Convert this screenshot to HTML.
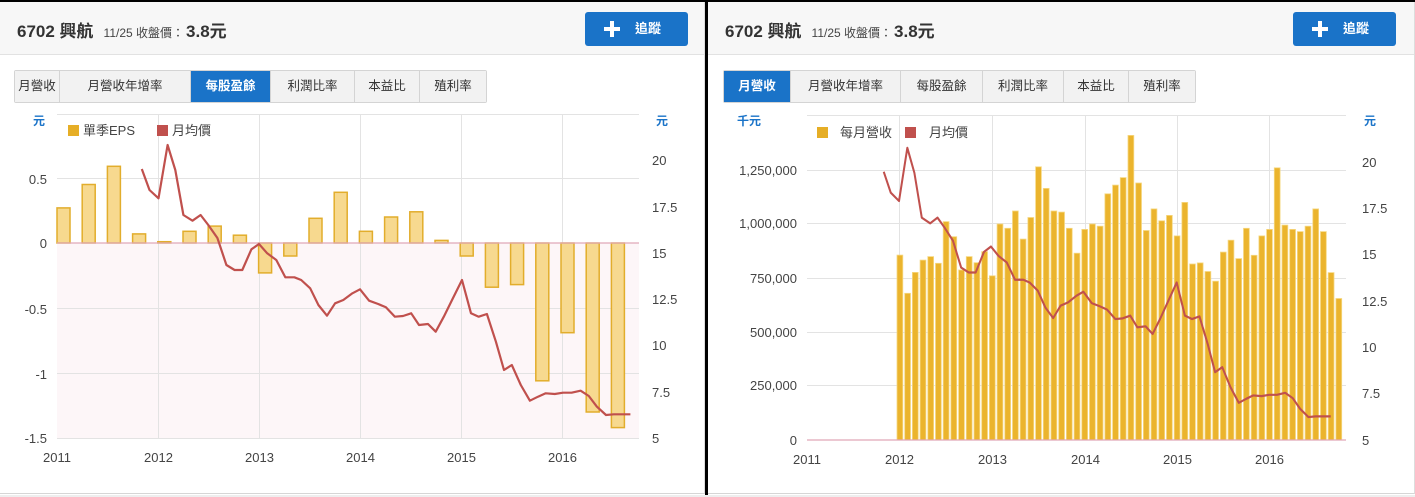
<!DOCTYPE html>
<html><head><meta charset="utf-8"><style>
*{margin:0;padding:0;box-sizing:border-box}
body{width:1415px;height:497px;position:relative;overflow:hidden;background:#fff;font-family:"Liberation Sans","Noto Sans CJK TC",sans-serif}
.panel{position:absolute;top:2px;height:492px;background:#fff;border-right:1px solid #ddd;border-bottom:1px solid #d6d6d6}
.hdr{position:absolute;left:0;top:0;right:0;height:53px;background:#f7f7f7;border-bottom:1px solid #e2e2e2}
.ttl{position:absolute;left:17px;top:15px;font-size:17px;font-weight:bold;color:#333;white-space:nowrap}
.ttl small{font-size:12px;font-weight:normal;color:#444;margin:0 2px 0 10px}
.btn{position:absolute;top:10px;width:103px;height:34px;background:#1a73c8;border-radius:3px;color:#fff;font-size:13px;font-weight:bold;line-height:34px}
.btn svg{position:absolute;left:19px;top:9px}
.btn span{position:absolute;left:50px}
.tabs{position:absolute;top:68px;height:33px;display:flex;border:1px solid #d4d4d4;border-radius:2px}
.tabs div{height:31px;line-height:31px;font-size:12.5px;color:#333;background:#f2f2f2;border-right:1px solid #d4d4d4;text-align:center;white-space:nowrap}
.tabs div:last-child{border-right:0}
.tabs .on{background:#1a73c8;color:#fff;font-weight:bold}
svg.c{position:absolute;left:0;top:0}
svg text{font-family:"Liberation Sans","Noto Sans CJK TC",sans-serif;font-size:13px;fill:#444}
</style></head><body>
<div style="position:absolute;left:0;top:0;width:1415px;height:2px;background:#000"></div>
<div style="position:absolute;left:705px;top:0;width:3px;height:497px;background:#000"></div>
<div style="position:absolute;left:0;top:495px;width:1415px;height:2px;background:#eee"></div>

<div class="panel" style="left:0;width:705px">
 <div class="hdr"></div>
 <div class="ttl">6702 興航<small>11/25 收盤價：</small>3.8元</div>
 <div class="btn" style="left:585px"><svg width="16" height="16"><rect x="6" y="0" width="4" height="16" fill="#fff"/><rect x="0" y="6" width="16" height="4" fill="#fff"/></svg><span>追蹤</span></div>
 <div class="tabs" style="left:14px">
  <div style="width:45px">月營收</div><div style="width:131px">月營收年增率</div><div class="on" style="width:80px">每股盈餘</div><div style="width:84px">利潤比率</div><div style="width:65px">本益比</div><div style="width:66px">殖利率</div>
 </div>
</div>
<div class="panel" style="left:708px;width:707px">
 <div class="hdr"></div>
 <div class="ttl">6702 興航<small>11/25 收盤價：</small>3.8元</div>
 <div class="btn" style="left:585px"><svg width="16" height="16"><rect x="6" y="0" width="4" height="16" fill="#fff"/><rect x="0" y="6" width="16" height="4" fill="#fff"/></svg><span>追蹤</span></div>
 <div class="tabs" style="left:15px">
  <div class="on" style="width:67px">月營收</div><div style="width:110px">月營收年增率</div><div style="width:82px">每股盈餘</div><div style="width:81px">利潤比率</div><div style="width:65px">本益比</div><div style="width:66px">殖利率</div>
 </div>
</div>

<svg class="c" width="1415" height="497" viewBox="0 0 1415 497">
<rect x="57" y="243" width="582" height="195" fill="#fdf6f8"/>
<g stroke="#e3e3e3" stroke-width="1">
<line x1="57" y1="114.5" x2="639" y2="114.5"/><line x1="57" y1="178.5" x2="639" y2="178.5"/>
<line x1="57" y1="308.5" x2="639" y2="308.5"/><line x1="57" y1="373.5" x2="639" y2="373.5"/><line x1="57" y1="438.5" x2="639" y2="438.5"/>
<line x1="158.5" y1="114" x2="158.5" y2="438"/><line x1="259.5" y1="114" x2="259.5" y2="438"/><line x1="360.5" y1="114" x2="360.5" y2="438"/><line x1="461.5" y1="114" x2="461.5" y2="438"/><line x1="562.5" y1="114" x2="562.5" y2="438"/>
</g>
<g fill="#f7d98f" stroke="#e2ad2c" stroke-width="1.5">
<rect x="57" y="207.9" width="13" height="35.1"/><rect x="82.2" y="184.5" width="13" height="58.5"/><rect x="107.4" y="166.3" width="13" height="76.7"/><rect x="132.6" y="233.9" width="13" height="9.1"/><rect x="157.8" y="241.7" width="13" height="1.3"/><rect x="183" y="231.3" width="13" height="11.7"/><rect x="208.2" y="226.1" width="13" height="16.9"/><rect x="233.4" y="235.2" width="13" height="7.8"/><rect x="258.6" y="243" width="13" height="29.9"/><rect x="283.8" y="243" width="13" height="13"/><rect x="309" y="218.3" width="13" height="24.7"/><rect x="334.2" y="192.3" width="13" height="50.7"/><rect x="359.4" y="231.3" width="13" height="11.7"/><rect x="384.6" y="217" width="13" height="26"/><rect x="409.8" y="211.8" width="13" height="31.2"/><rect x="435" y="240.4" width="13" height="2.6"/><rect x="460.2" y="243" width="13" height="13"/><rect x="485.4" y="243" width="13" height="44.2"/><rect x="510.6" y="243" width="13" height="41.6"/><rect x="535.8" y="243" width="13" height="137.8"/><rect x="561" y="243" width="13" height="89.7"/><rect x="586.2" y="243" width="13" height="169"/><rect x="611.4" y="243" width="13" height="184.6"/>
</g>
<line x1="57" y1="243" x2="639" y2="243" stroke="#e0a8b8" stroke-width="1.2"/>
<polyline id="pl" fill="none" stroke="#c0504d" stroke-width="2.2" stroke-linejoin="round" points="141.8,169 149.5,190 158.5,198.3 167.6,145 175.3,170 183.4,215 192.5,220.7 200.6,215 208.3,225 217.4,238 226.4,265 234.6,270 242.3,270 251.4,249.3 259,244 267.2,253.3 276.3,260 285.3,277.3 294.4,277.3 301.2,280 310.2,288.3 318.4,305 327,315.7 335.1,303.3 343.3,300 352.4,293.3 360,289.3 369.1,300.7 378.2,304 385.9,307.3 394.9,316.7 403,316 411.2,313.3 419,325 428,324 435.7,331.7 443.8,316.7 452.9,298.3 462,280 471,313.3 478.7,316.7 486.9,314 495.9,341.7 504,370 511.8,365 520.8,385 529.9,400.7 538,396.7 545.7,393.3 554.8,394 563,392.7 571.6,392.7 580.6,390.7 588.8,396 596.9,406.7 606,415 613.7,414.3 622.7,414.3 630.4,414.3"/>
<g text-anchor="end"><text x="47" y="184">0.5</text><text x="47" y="248">0</text><text x="47" y="314">-0.5</text><text x="47" y="379">-1</text><text x="47" y="443">-1.5</text></g>
<g><text x="652" y="165">20</text><text x="652" y="212">17.5</text><text x="652" y="258">15</text><text x="652" y="304">12.5</text><text x="652" y="350">10</text><text x="652" y="397">7.5</text><text x="652" y="443">5</text></g>
<g text-anchor="middle"><text x="57" y="462">2011</text><text x="158.5" y="462">2012</text><text x="259.5" y="462">2013</text><text x="360.5" y="462">2014</text><text x="461.5" y="462">2015</text><text x="562.5" y="462">2016</text></g>
<text x="33" y="125" style="fill:#1a73c8;font-weight:bold;font-size:12px">元</text>
<text x="656" y="125" style="fill:#1a73c8;font-weight:bold;font-size:12px">元</text>
<rect x="68" y="125" width="11" height="11" fill="#e6ae26"/><text x="83" y="135">單季EPS</text>
<rect x="157" y="125" width="11" height="11" fill="#c0504d"/><text x="172" y="135">月均價</text>

<g stroke="#e3e3e3" stroke-width="1">
<line x1="807" y1="115.5" x2="1346" y2="115.5"/><line x1="807" y1="170.5" x2="1346" y2="170.5"/><line x1="807" y1="223.5" x2="1346" y2="223.5"/><line x1="807" y1="278.5" x2="1346" y2="278.5"/><line x1="807" y1="332.5" x2="1346" y2="332.5"/><line x1="807" y1="385.5" x2="1346" y2="385.5"/>
<line x1="899.5" y1="115" x2="899.5" y2="440"/><line x1="992.5" y1="115" x2="992.5" y2="440"/><line x1="1085.5" y1="115" x2="1085.5" y2="440"/><line x1="1177.5" y1="115" x2="1177.5" y2="440"/><line x1="1269.5" y1="115" x2="1269.5" y2="440"/>
</g>
<g fill="#ebb42d" stroke="#f6d882" stroke-width="0.8">
<rect x="897" y="255.1" width="5.8" height="184.9"/><rect x="904.7" y="293.3" width="5.8" height="146.7"/><rect x="912.4" y="272.4" width="5.8" height="167.6"/><rect x="920.1" y="260.1" width="5.8" height="179.9"/><rect x="927.8" y="256.6" width="5.8" height="183.4"/><rect x="935.5" y="263.3" width="5.8" height="176.7"/><rect x="943.2" y="221.6" width="5.8" height="218.4"/><rect x="950.9" y="236.7" width="5.8" height="203.3"/><rect x="958.6" y="270" width="5.8" height="170"/><rect x="966.3" y="256.6" width="5.8" height="183.4"/><rect x="974" y="262.7" width="5.8" height="177.3"/><rect x="981.7" y="251.6" width="5.8" height="188.4"/>
<rect x="989.4" y="275.8" width="5.8" height="164.2"/><rect x="997.1" y="224" width="5.8" height="216"/><rect x="1004.8" y="228.3" width="5.8" height="211.7"/><rect x="1012.5" y="211" width="5.8" height="229"/><rect x="1020.2" y="239.1" width="5.8" height="200.9"/><rect x="1027.9" y="217.5" width="5.8" height="222.5"/><rect x="1035.6" y="166.8" width="5.8" height="273.2"/><rect x="1043.3" y="188.4" width="5.8" height="251.6"/><rect x="1051" y="211" width="5.8" height="229"/><rect x="1058.7" y="212.1" width="5.8" height="227.9"/><rect x="1066.4" y="228.3" width="5.8" height="211.7"/><rect x="1074.1" y="253.2" width="5.8" height="186.8"/>
<rect x="1081.8" y="229.4" width="5.8" height="210.6"/><rect x="1089.5" y="224" width="5.8" height="216"/><rect x="1097.2" y="226.2" width="5.8" height="213.8"/><rect x="1104.9" y="193.8" width="5.8" height="246.2"/><rect x="1112.6" y="185.1" width="5.8" height="254.9"/><rect x="1120.3" y="177.6" width="5.8" height="262.4"/><rect x="1128" y="135.4" width="5.8" height="304.6"/><rect x="1135.7" y="183" width="5.8" height="257"/><rect x="1143.4" y="230.5" width="5.8" height="209.5"/><rect x="1151.1" y="208.9" width="5.8" height="231.1"/><rect x="1158.8" y="220.8" width="5.8" height="219.2"/><rect x="1166.5" y="215.4" width="5.8" height="224.6"/>
<rect x="1174.2" y="235.9" width="5.8" height="204.1"/><rect x="1181.9" y="202.4" width="5.8" height="237.6"/><rect x="1189.6" y="264" width="5.8" height="176"/><rect x="1197.3" y="262.9" width="5.8" height="177.1"/><rect x="1205" y="271.5" width="5.8" height="168.5"/><rect x="1212.7" y="281.2" width="5.8" height="158.8"/><rect x="1220.4" y="252.1" width="5.8" height="187.9"/><rect x="1228.1" y="240.2" width="5.8" height="199.8"/><rect x="1235.8" y="258.6" width="5.8" height="181.4"/><rect x="1243.5" y="228.3" width="5.8" height="211.7"/><rect x="1251.2" y="255.3" width="5.8" height="184.7"/><rect x="1258.9" y="235.9" width="5.8" height="204.1"/>
<rect x="1266.6" y="229.4" width="5.8" height="210.6"/><rect x="1274.3" y="167.8" width="5.8" height="272.2"/><rect x="1282" y="225.1" width="5.8" height="214.9"/><rect x="1289.7" y="229.4" width="5.8" height="210.6"/><rect x="1297.4" y="231.6" width="5.8" height="208.4"/><rect x="1305.1" y="226.2" width="5.8" height="213.8"/><rect x="1312.8" y="208.9" width="5.8" height="231.1"/><rect x="1320.5" y="231.6" width="5.8" height="208.4"/><rect x="1328.2" y="272.6" width="5.8" height="167.4"/><rect x="1335.9" y="298.5" width="5.8" height="141.5"/>
</g>
<line x1="807" y1="440" x2="1346" y2="440" stroke="#e0a8b8" stroke-width="1.2"/>
<use href="#pl" transform="matrix(0.9149 0 0 0.997 754 3.3)"/>
<g text-anchor="end"><text x="797" y="175">1,250,000</text><text x="797" y="228">1,000,000</text><text x="797" y="283">750,000</text><text x="797" y="337">500,000</text><text x="797" y="390">250,000</text><text x="797" y="445">0</text></g>
<g><text x="1362" y="167">20</text><text x="1362" y="213">17.5</text><text x="1362" y="259">15</text><text x="1362" y="306">12.5</text><text x="1362" y="352">10</text><text x="1362" y="398">7.5</text><text x="1362" y="445">5</text></g>
<g text-anchor="middle"><text x="807" y="464">2011</text><text x="899.5" y="464">2012</text><text x="992.5" y="464">2013</text><text x="1085.5" y="464">2014</text><text x="1177.5" y="464">2015</text><text x="1269.5" y="464">2016</text></g>
<text x="737" y="125" style="fill:#1a73c8;font-weight:bold;font-size:12px">千元</text>
<text x="1364" y="125" style="fill:#1a73c8;font-weight:bold;font-size:12px">元</text>
<rect x="817" y="127" width="11" height="11" fill="#e6ae26"/><text x="840" y="137">每月營收</text>
<rect x="905" y="127" width="11" height="11" fill="#c0504d"/><text x="929" y="137">月均價</text>
</svg>
</body></html>
